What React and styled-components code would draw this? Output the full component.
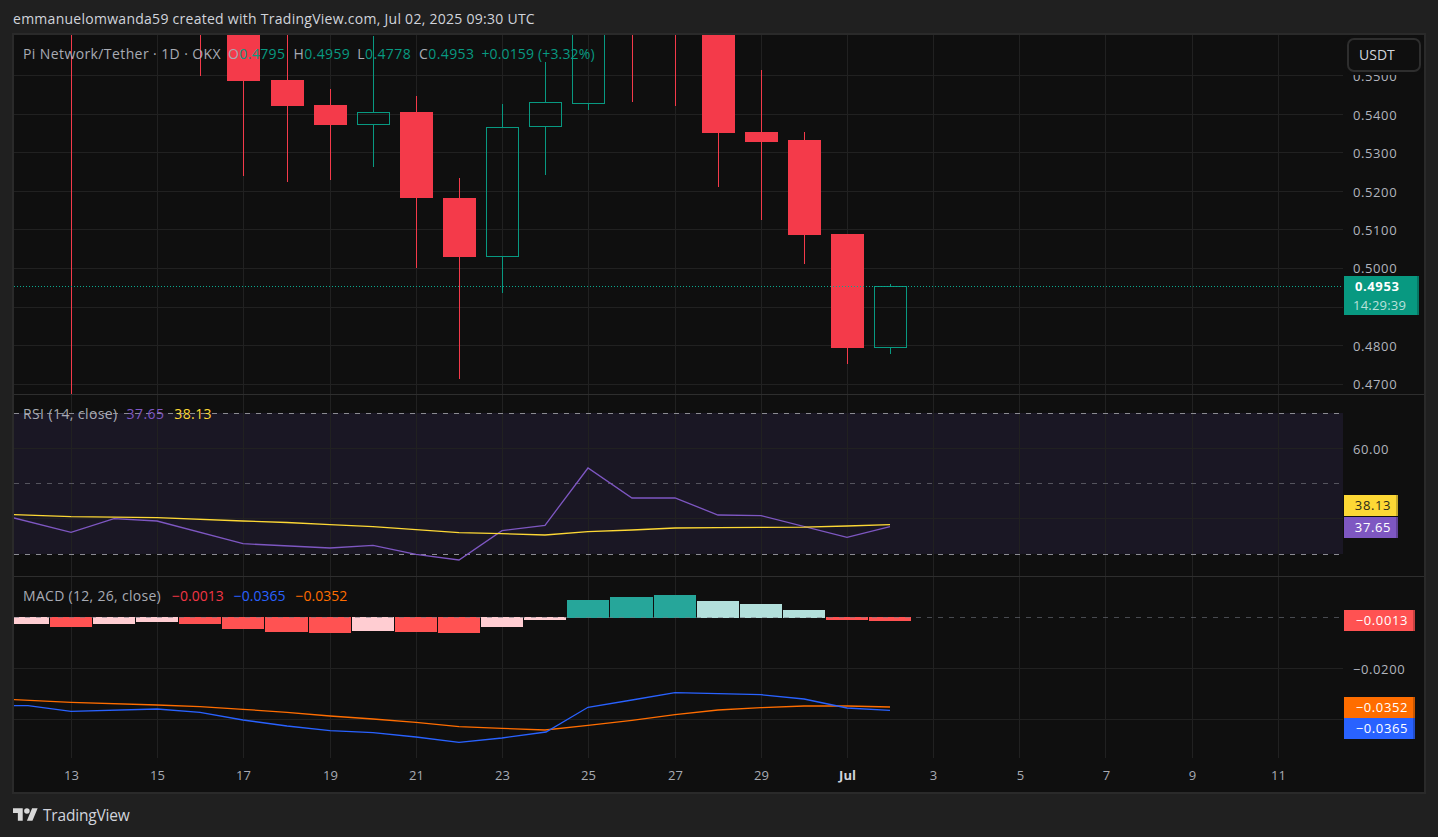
import React from 'react';
import styled, { createGlobalStyle } from 'styled-components';

const FONT = '"Open Sans", "Noto Sans", "DejaVu Sans", sans-serif';
const GRID = '#212121';
const GREEN = '#089981';
const RED = '#f43a4a';

const Global = createGlobalStyle`
  html, body { margin: 0; padding: 0; background: #202020; }
  body { font-family: ${FONT}; overflow: hidden; }
`;

const Page = styled.div`
  width: 1438px;
  height: 837px;
  display: flex;
  flex-direction: column;
  background: #202020;
`;
const Header = styled.header`
  height: 33px;
  padding: 9px 0 0 13px;
  box-sizing: border-box;
  font-size: 14px;
  line-height: 20px;
  letter-spacing: 0.27px;
  color: #d1d4dc;
  white-space: nowrap;
`;
const Frame = styled.main`
  width: 1414px;
  height: 761px;
  margin-left: 12px;
  box-sizing: border-box;
  border: 2px solid #2a2a2a;
  background: #0f0f0f;
  display: flex;
  flex-direction: column;
  position: relative;
`;
const Pane = styled.section`
  height: ${p => p.$height}px;
  box-sizing: border-box;
  display: flex;
  border-bottom: ${p => (p.$divider ? '1px solid #2e2e2e' : '0')};
  flex: none;
`;
const Plot = styled.div`
  width: 1329px;
  position: relative;
  overflow: hidden;
  flex: none;
`;
const Drawing = styled.svg`
  display: block;
  width: 1329px;
  height: 100%;
`;
const Axis = styled.div`
  flex: 1;
  position: relative;
  overflow: hidden;
`;
const AxisLabel = styled.span`
  position: absolute;
  left: 10px;
  top: ${p => p.$y}px;
  transform: translateY(-50%);
  font-size: 13px;
  line-height: 16px;
  letter-spacing: 0.6px;
  color: #b2b5be;
`;
const Tag = styled.div`
  position: absolute;
  left: 1px;
  top: ${p => p.$y}px;
  width: ${p => p.$w}px;
  height: ${p => p.$h}px;
  box-sizing: border-box;
  background: ${p => p.$bg};
  color: ${p => p.$fg || '#fff'};
  border-right: 2px solid rgba(0, 0, 0, 0.22);
  font-size: 13px;
  line-height: ${p => p.$h}px;
  letter-spacing: 0.6px;
  text-align: right;
  padding-right: 5px;
`;
const PriceTag = styled(Tag)`
  padding: 1px 0 0 11px;
  text-align: left;
  line-height: 19px;
`;
const PriceValue = styled.div`
  font-weight: 700;
`;
const Countdown = styled.div`
  color: rgba(255, 255, 255, 0.72);
  letter-spacing: 0.2px;
  margin-left: -2px;
`;
const CurrencyButton = styled.div`
  position: absolute;
  right: 3px;
  top: 3px;
  width: 74px;
  height: 34px;
  box-sizing: border-box;
  border: 2px solid #2e2e2e;
  border-radius: 7px;
  background: #0f0f0f;
  box-shadow: 0 0 0 3px #0f0f0f;
  color: #d1d4dc;
  font-size: 14px;
  line-height: 30px;
  padding-left: 10px;
  z-index: 2;
`;
const Legend = styled.div`
  position: absolute;
  left: 9px;
  top: ${p => p.$top}px;
  display: flex;
  align-items: center;
  font-size: 14px;
  line-height: 18px;
  letter-spacing: ${p => p.$spacing ?? 0.4}px;
  color: #a8abb4;
  white-space: nowrap;
`;
const Reading = styled.span`
  color: ${p => p.$color};
  margin-left: ${p => p.$gap ?? 7}px;
  letter-spacing: ${p => p.$spacing ?? 0.4}px;
`;
const Ohlc = styled.span`
  margin-left: ${p => p.$gap}px;
`;
const TimeRow = styled.div`
  height: 34px;
  position: relative;
  flex: none;
`;
const TimeLabel = styled.span`
  position: absolute;
  left: ${p => p.$x}px;
  top: 8px;
  transform: translateX(-50%);
  font-size: 13px;
  line-height: 18px;
  font-weight: ${p => (p.$strong ? 700 : 400)};
  color: ${p => (p.$strong ? '#d1d4dc' : '#a8abb4')};
`;
const Footer = styled.footer`
  flex: 1;
  display: flex;
  align-items: center;
  gap: 5px;
  padding: 0 0 2px 13px;
  color: #d1d4dc;
  font-size: 15.5px;
  letter-spacing: -0.2px;
`;
const Logo = styled.svg`
  width: 25px;
  height: 13px;
  fill: #d8d8d8;
`;

const VX = [71, 157, 243, 330, 416, 502, 588, 675, 761, 847, 933, 1019, 1105, 1192, 1278];
const TIMES = [['13', 71], ['15', 157], ['17', 243], ['19', 330], ['21', 416], ['23', 502], ['25', 588], ['27', 675], ['29', 761], ['Jul', 847, true], ['3', 933], ['5', 1020], ['7', 1106], ['9', 1192], ['11', 1278]];

const CANDLES = [
  { x: 71, hi: 30, lo: 394, up: false },
  { x: 200, hi: 30, lo: 76, up: false },
  { x: 243, t: 30, b: 81, lo: 176, up: false },
  { x: 287, t: 80, b: 106, hi: 30, lo: 182, up: false },
  { x: 330, t: 105, b: 125, hi: 89, lo: 180, up: false },
  { x: 373, t: 112, b: 125, hi: 36, lo: 167, up: true },
  { x: 416, t: 112, b: 198, hi: 96, lo: 268, up: false },
  { x: 459, t: 198, b: 257, hi: 178, lo: 379, up: false },
  { x: 502, t: 127, b: 257, hi: 104, lo: 293, up: true },
  { x: 545, t: 102, b: 127, hi: 62, lo: 175, up: true },
  { x: 588, t: 25, b: 104, lo: 110, up: true },
  { x: 632, hi: 30, lo: 102, up: false },
  { x: 675, hi: 30, lo: 106, up: false },
  { x: 718, t: 30, b: 133, lo: 187, up: false },
  { x: 761, t: 132, b: 142, hi: 70, lo: 220, up: false },
  { x: 804, t: 140, b: 235, hi: 132, lo: 264, up: false },
  { x: 847, t: 234, b: 348, lo: 364, up: false },
  { x: 890, t: 286, b: 348, hi: 284, lo: 354, up: true },
];

const RSI = [[14, 518], [71, 532.3], [114, 518.7], [157, 521], [243, 543.7], [330, 548], [373, 545.3], [416, 554.3], [459, 560], [502, 530.7], [545, 525.3], [588, 468], [632, 498], [675, 498], [718, 515], [761, 515.7], [847, 537.3], [890, 526.7]];
const RSI_MA = [[14, 514.7], [71, 516.7], [157, 517.7], [243, 521], [287, 522.5], [330, 524.7], [373, 526.7], [416, 529.7], [459, 532.7], [502, 533.7], [545, 535], [588, 531.7], [632, 530], [675, 528], [718, 527.7], [761, 527.3], [804, 527.2], [847, 526], [890, 524.7]];
const MACD = [[14, 705.7], [28, 705.7], [71, 711.3], [157, 709], [200, 712.3], [243, 720], [287, 726], [330, 730.7], [373, 732.7], [416, 737], [459, 742.3], [502, 738], [546, 732], [588, 707.3], [632, 700], [675, 692.7], [718, 693.7], [761, 694.7], [804, 699], [847, 708], [890, 710.3]];
const SIGNAL = [[14, 699.7], [71, 702.3], [157, 705], [200, 706.7], [243, 709.3], [287, 712.3], [330, 716], [373, 719], [416, 722.3], [459, 726.7], [502, 728.3], [545, 730], [588, 725.3], [632, 720.3], [675, 714.7], [718, 710], [761, 707.7], [804, 706], [847, 706], [890, 707]];

const P = '#ffcdd2', R = '#ff5252', T = '#26a69a', L = '#b2dfdb';
const HIST = [
  [14, 49, 617, 624, P], [50, 92, 617, 627, R], [93, 135, 617, 624, P], [136, 178, 617, 622, P],
  [179, 221, 617, 624, R], [222, 264, 617, 629, R], [265, 308, 617, 632, R], [309, 351, 617, 633, R],
  [352, 394, 617, 631, P], [395, 437, 617, 632, R], [438, 480, 617, 633, R], [481, 523, 617, 627, P],
  [524, 566, 617, 620, P], [567, 609, 600, 618, T], [610, 653, 597, 618, T], [654, 696, 595, 618, T],
  [697, 739, 601, 618, L], [740, 782, 604, 618, L], [783, 825, 610, 618, L], [826, 868, 617, 620, R],
  [869, 911, 617, 621, R],
];

const pts = a => a.map(p => p.join(',')).join(' ');

function Grid({ hy, top, bottom }) {
  return (
    <g shapeRendering="crispEdges" stroke={GRID} strokeWidth="1">
      {VX.map(x => <line key={x} x1={x + 0.5} x2={x + 0.5} y1={top} y2={bottom} />)}
      {hy.map(y => <line key={y} x1="14" x2="1343" y1={y + 0.5} y2={y + 0.5} />)}
    </g>
  );
}

function Candle({ x, t, b, hi, lo, up }) {
  const color = up ? GREEN : RED;
  const cx = x + 0.5;
  const hasBody = t !== undefined;
  return (
    <g shapeRendering="crispEdges">
      {hasBody ? (
        <>
          {hi !== undefined && <line x1={cx} x2={cx} y1={hi} y2={t} stroke={color} />}
          {lo !== undefined && <line x1={cx} x2={cx} y1={b} y2={lo} stroke={color} />}
          {up
            ? <rect x={x - 15.5} y={t + 0.5} width={32} height={b - t - 1} fill="none" stroke={color} />
            : <rect x={x - 16} y={t} width={33} height={b - t} fill={color} />}
        </>
      ) : (
        <line x1={cx} x2={cx} y1={hi} y2={lo} stroke={color} />
      )}
    </g>
  );
}

function Dash({ y, color }) {
  return <line x1="14" x2="1343" y1={y + 0.5} y2={y + 0.5} stroke={color} strokeDasharray="5 6" shapeRendering="crispEdges" />;
}

export default function App() {
  return (
    <Page>
      <Global />
      <Header>emmanuelomwanda59 created with TradingView.com, Jul 02, 2025 09:30 UTC</Header>
      <Frame>
        <Pane $height={360} $divider>
          <Plot>
            <Drawing viewBox="14 35 1329 359" preserveAspectRatio="none">
              <Grid hy={[75, 114, 152, 191, 229, 268, 307, 345, 384]} top={35} bottom={394} />
              {CANDLES.map(c => <Candle key={c.x} {...c} />)}
              <line x1="14" x2="1343" y1="286.5" y2="286.5" stroke="#0aa88e" strokeDasharray="1 2" shapeRendering="crispEdges" />
            </Drawing>
            <Legend $top={10}>
              <span>Pi Network/Tether · 1D · OKX</span>
              <Ohlc $gap={7}>O</Ohlc><Reading $color={GREEN} $gap={0}>0.4795</Reading>
              <Ohlc $gap={8}>H</Ohlc><Reading $color={GREEN} $gap={0}>0.4959</Reading>
              <Ohlc $gap={7}>L</Ohlc><Reading $color={GREEN} $gap={0}>0.4778</Reading>
              <Ohlc $gap={8}>C</Ohlc><Reading $color={GREEN} $gap={0}>0.4953</Reading>
              <Reading $color={GREEN} $gap={7} $spacing={0.15}>+0.0159 (+3.32%)</Reading>
            </Legend>
          </Plot>
          <Axis>
            {[['0.5500', 41], ['0.5400', 80], ['0.5300', 118], ['0.5200', 157], ['0.5100', 195], ['0.5000', 233], ['0.4800', 311], ['0.4700', 349]].map(([t, y]) => (
              <AxisLabel key={t} $y={y}>{t}</AxisLabel>
            ))}
            <PriceTag $y={241} $w={75} $h={39} $bg="#089981">
              <PriceValue>0.4953</PriceValue>
              <Countdown>14:29:39</Countdown>
            </PriceTag>
          </Axis>
          <CurrencyButton>USDT</CurrencyButton>
        </Pane>
        <Pane $height={182} $divider>
          <Plot>
            <Drawing viewBox="14 395 1329 181" preserveAspectRatio="none">
              <rect x="14" y="413" width="1329" height="141" fill="#1a1724" />
              <Grid hy={[448, 518]} top={395} bottom={576} />
              <Dash y={413} color="#8b8b92" />
              <Dash y={483} color="#55545e" />
              <Dash y={554} color="#8b8b92" />
              <polyline points={pts(RSI)} fill="none" stroke="#7e57c2" strokeWidth="1.3" />
              <polyline points={pts(RSI_MA)} fill="none" stroke="#fdd835" strokeWidth="1.3" />
            </Drawing>
            <Legend $top={10}>
              <span>RSI (14, close)</span>
              <Reading $color="#7e57c2" $gap={9}>37.65</Reading>
              <Reading $color="#fdd835" $gap={10}>38.13</Reading>
            </Legend>
          </Plot>
          <Axis>
            <AxisLabel $y={54}>60.00</AxisLabel>
            <Tag $y={100} $w={54} $h={21} $bg="#fdd835" $fg="#2a2a1a">38.13</Tag>
            <Tag $y={122} $w={54} $h={21} $bg="#7e57c2">37.65</Tag>
          </Axis>
        </Pane>
        <Pane $height={181}>
          <Plot>
            <Drawing viewBox="14 577 1329 181" preserveAspectRatio="none">
              <Grid hy={[668, 719]} top={577} bottom={758} />
              <g shapeRendering="crispEdges">
                {HIST.map(([a, b, t, e, c]) => <rect key={a} x={a} y={t} width={b - a} height={e - t} fill={c} />)}
              </g>
              <Dash y={617} color="rgba(120,123,134,0.55)" />
              <polyline points={pts(SIGNAL)} fill="none" stroke="#ff6d00" strokeWidth="1.3" />
              <polyline points={pts(MACD)} fill="none" stroke="#2962ff" strokeWidth="1.3" />
            </Drawing>
            <Legend $top={10} $spacing={0.3}>
              <span>MACD (12, 26, close)</span>
              <Reading $color="#f23645" $gap={11} $spacing={0}>−0.0013</Reading>
              <Reading $color="#2962ff" $gap={10} $spacing={0}>−0.0365</Reading>
              <Reading $color="#ff6d00" $gap={10} $spacing={0}>−0.0352</Reading>
            </Legend>
          </Plot>
          <Axis>
            <AxisLabel $y={92}>−0.0200</AxisLabel>
            <Tag $y={33} $w={71} $h={21} $bg="#ff5252">−0.0013</Tag>
            <Tag $y={120} $w={71} $h={21} $bg="#ff6d00">−0.0352</Tag>
            <Tag $y={141} $w={71} $h={21} $bg="#2962ff">−0.0365</Tag>
          </Axis>
        </Pane>
        <TimeRow>
          {TIMES.map(([t, x, s]) => <TimeLabel key={t} $x={x - 14 + 0.5} $strong={s}>{t}</TimeLabel>)}
        </TimeRow>
      </Frame>
      <Footer>
        <Logo viewBox="0 0 36 18">
          <path d="M14 18H7V7H0V0h14v18zM28 18h-8L27.5 0h8L28 18z" />
          <circle cx="20" cy="4" r="4" />
        </Logo>
        <span>TradingView</span>
      </Footer>
    </Page>
  );
}
